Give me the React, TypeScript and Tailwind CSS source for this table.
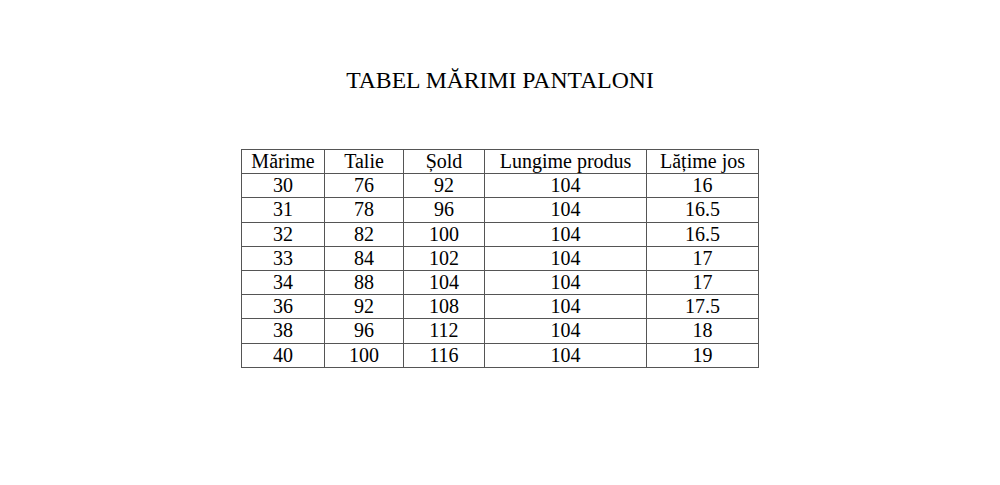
const rows = [
  ["30", "76", "92", "104", "16"],
  ["31", "78", "96", "104", "16.5"],
  ["32", "82", "100", "104", "16.5"],
  ["33", "84", "102", "104", "17"],
  ["34", "88", "104", "104", "17"],
  ["36", "92", "108", "104", "17.5"],
  ["38", "96", "112", "104", "18"],
  ["40", "100", "116", "104", "19"],
];

const headers = ["Mărime", "Talie", "Șold", "Lungime produs", "Lățime jos"];
const widths = ["w-[83px]", "w-[79px]", "w-[81px]", "w-[162px]", "w-[112px]"];

export default function App() {
  return (
    <div className="min-h-screen bg-white pt-[67px] flex flex-col items-center text-black font-['Liberation_Serif','Times_New_Roman',serif]">
      {/* Title */}
      <h1 className="text-[23.7px] leading-[26px] font-normal">
        TABEL MĂRIMI PANTALONI
      </h1>

      {/* Size table */}
      <table className="mt-[56px] border-collapse table-fixed text-[20px] leading-[23px]">
        <thead>
          <tr>
            {headers.map((h, i) => (
              <th
                key={h}
                className={`${widths[i]} h-[24.2px] p-0 border border-[#555] font-normal text-center`}
              >
                {h}
              </th>
            ))}
          </tr>
        </thead>
        <tbody>
          {rows.map((r) => (
            <tr key={r[0]}>
              {r.map((v, i) => (
                <td
                  key={i}
                  className="h-[24.2px] p-0 border border-[#555] text-center"
                >
                  {v}
                </td>
              ))}
            </tr>
          ))}
        </tbody>
      </table>
    </div>
  );
}
